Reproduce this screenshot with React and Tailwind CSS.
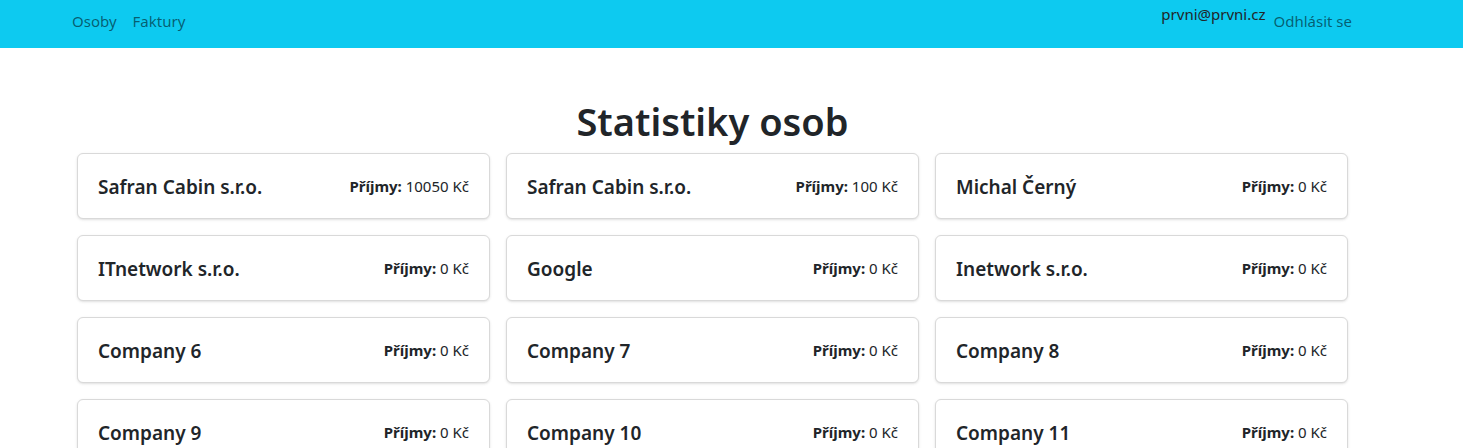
const people = [
  { name: 'Safran Cabin s.r.o.', revenue: 10050 },
  { name: 'Safran Cabin s.r.o.', revenue: 100 },
  { name: 'Michal Černý', revenue: 0 },
  { name: 'ITnetwork s.r.o.', revenue: 0 },
  { name: 'Google', revenue: 0 },
  { name: 'Inetwork s.r.o.', revenue: 0 },
  { name: 'Company 6', revenue: 0 },
  { name: 'Company 7', revenue: 0 },
  { name: 'Company 8', revenue: 0 },
  { name: 'Company 9', revenue: 0 },
  { name: 'Company 10', revenue: 0 },
  { name: 'Company 11', revenue: 0 },
];

export default function App() {
  return (
    <div className="min-h-screen bg-white text-[#212529] font-['Noto_Sans',sans-serif]">
      {/* Navbar */}
      <nav className="h-12 bg-[#0dcaf0] flex items-start justify-between pl-[72px] pr-[111px]">
        <div className="flex gap-4 pt-[10px] text-[15px] text-black/55">
          <a href="#">Osoby</a>
          <a href="#">Faktury</a>
        </div>
        <div className="flex items-start gap-2 text-[15px]">
          <span className="pt-[3px] text-[#212529]">prvni@prvni.cz</span>
          <a href="#" className="pt-[10px] text-black/55">Odhlásit se</a>
        </div>
      </nav>

      {/* Content */}
      <div className="pl-[77px]">
        <div className="w-[1271px]">
          <h1 className="mt-[49px] mb-2 text-center text-[38px] leading-[48px] font-semibold">
            Statistiky osob
          </h1>
          <div className="grid grid-cols-3 gap-x-4 gap-y-4">
            {people.map((p, i) => (
              <div
                key={i}
                className="h-[66px] rounded-md border border-[#d9d9d9] bg-white shadow-sm flex items-center justify-between px-5"
              >
                <h5 className="text-[19px] font-semibold pt-[2px]">{p.name}</h5>
                <p className="text-[15px]">
                  <span className="font-bold">Příjmy:</span> {p.revenue} Kč
                </p>
              </div>
            ))}
          </div>
        </div>
      </div>
    </div>
  );
}
